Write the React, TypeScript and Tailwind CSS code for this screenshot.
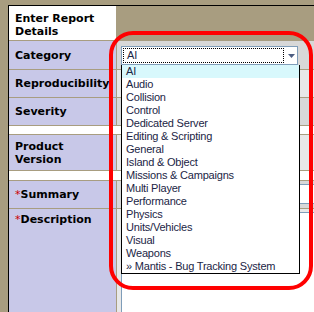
import React from 'react';

const categories = [
  'AI',
  'Audio',
  'Collision',
  'Control',
  'Dedicated Server',
  'Editing & Scripting',
  'General',
  'Island & Object',
  'Missions & Campaigns',
  'Multi Player',
  'Performance',
  'Physics',
  'Units/Vehicles',
  'Visual',
  'Weapons',
  '» Mantis - Bug Tracking System',
];

function Label({ children, top = false }: { children: React.ReactNode; top?: boolean }) {
  return (
    <div
      className={`w-[107px] shrink-0 bg-[#c8c8e8] pl-[6px] pr-[2px] flex font-['DejaVu_Sans',sans-serif] font-bold text-[11px] leading-[13px] text-black ${
        top ? 'items-start pt-[4px]' : 'items-center'
      }`}
    >
      <div>{children}</div>
    </div>
  );
}

function Star() {
  return <span className="font-normal text-[#cc0000]">*</span>;
}

function CategorySelect() {
  return (
    <div className="relative w-[177px] h-[19px] border border-[#7f9db9] bg-white flex">
      <div className="m-[1px] flex-1 border border-dotted border-black flex items-center pl-[3px] font-['Liberation_Sans',Arial,sans-serif] text-[11px] tracking-[-0.2px] text-[#1b2545]">
        AI
      </div>
      <div className="w-[12px] flex items-center justify-center">
        <svg width="7" height="4" viewBox="0 0 7 4">
          <path d="M0 0H7L3.5 4Z" fill="#4d5e82" />
        </svg>
      </div>

      {/* open dropdown list */}
      <div className="absolute left-[-1px] top-[18px] w-[179px] bg-white border-x border-b border-black z-10">
        {categories.map((c, i) => (
          <div
            key={c}
            className={`h-[13px] leading-[13px] pl-[4px] whitespace-nowrap font-['Liberation_Sans',Arial,sans-serif] text-[11px] tracking-[-0.2px] text-[#1b2545] ${
              i === 0 ? 'bg-[#d8f8fc]' : ''
            }`}
          >
            {c}
          </div>
        ))}
      </div>
    </div>
  );
}

export default function App() {
  return (
    <div className="relative w-[314px] h-[312px] overflow-hidden bg-[#a89d80]">
      {/* Report form table */}
      <div className="ml-[8px] mt-[5px] w-[420px] border-l border-t border-black flex flex-col gap-[1px]">
        <div className="flex gap-[1px] h-[34px]">
          <div className="w-[107px] shrink-0 bg-white pl-[6px] pt-[4px] flex items-center font-['DejaVu_Sans',sans-serif] font-bold text-[11px] leading-[13px] text-black">
            <div>
              Enter Report
              <br />
              Details
            </div>
          </div>
          <div className="flex-1" />
        </div>

        <div className="flex gap-[1px] h-[28px]">
          <Label>Category</Label>
          <div className="flex-1 bg-[#d8d8d8] pl-[4px] pt-[5px]">
            <CategorySelect />
          </div>
        </div>

        <div className="flex gap-[1px] h-[27px]">
          <Label>Reproducibility</Label>
          <div className="flex-1 bg-[#e8e8e8]" />
        </div>

        <div className="flex gap-[1px] h-[27px]">
          <Label>Severity</Label>
          <div className="flex-1 bg-[#d8d8d8]" />
        </div>

        <div className="h-[8px] bg-white" />

        <div className="flex gap-[1px] h-[35px]">
          <Label>
            Product
            <br />
            Version
          </Label>
          <div className="flex-1 bg-[#e8e8e8]" />
        </div>

        <div className="h-[9px] bg-white" />

        <div className="flex gap-[1px] h-[27px]">
          <Label>
            <Star />
            Summary
          </Label>
          <div className="flex-1 bg-[#d8d8d8] pl-[4px] pt-[3px]">
            <div className="w-[280px] h-[20px] border border-[#7f9db9] bg-white" />
          </div>
        </div>

        <div className="flex gap-[1px] h-[120px]">
          <Label top>
            <Star />
            Description
          </Label>
          <div className="flex-1 bg-[#e8e8e8] pl-[4px] pt-[3px]">
            <div className="w-[280px] h-[110px] border border-[#7f9db9] bg-white" />
          </div>
        </div>
      </div>

      {/* red annotation */}
      <div className="pointer-events-none absolute left-[109px] top-[31px] w-[204px] h-[259px] border-[4px] border-[#ff0000] rounded-[24px] z-20" />
    </div>
  );
}
